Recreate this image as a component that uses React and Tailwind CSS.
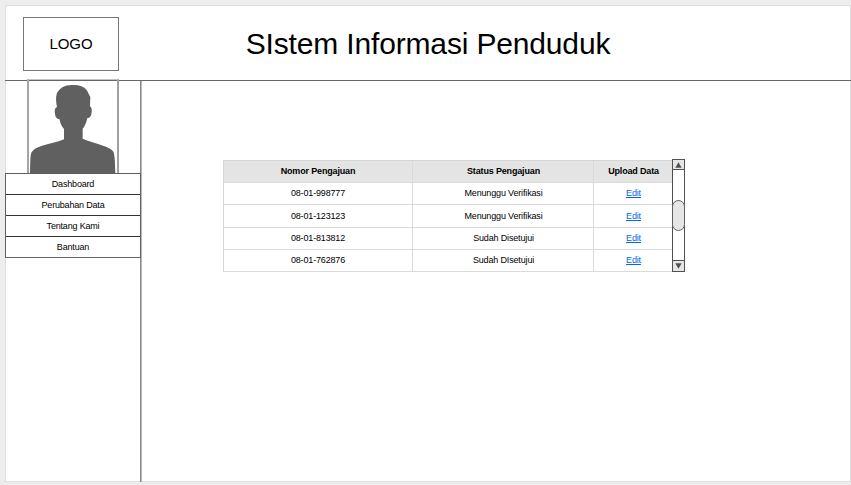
const menu = ['Dashboard', 'Perubahan Data', 'Tentang Kami', 'Bantuan'];

const rows = [
  { id: '08-01-998777', status: 'Menunggu Verifikasi', height: 'h-[22px]' },
  { id: '08-01-123123', status: 'Menunggu Verifikasi', height: 'h-[23px]' },
  { id: '08-01-813812', status: 'Sudah Disetujui', height: 'h-[22px]' },
  { id: '08-01-762876', status: 'Sudah DIsetujui', height: 'h-[22px]' },
];

function Avatar() {
  return (
    <div className="-mt-[2px] ml-[22px] h-[94px] w-[92px] border-x-2 border-t border-t-[#c4c4c4] border-l-[#a5a5a5] border-r-[#a0a0a0]">
      <svg className="mt-px block h-[92px] w-[88px]" viewBox="87 18 264 276" fill="#606060">
        <path d="M218 30C236 29 251 34 260 45C264 51 266 58 271 66L270 94C275 97 276 104 275 111C274 122 270 130 262 129C260 140 255 153 248 161V191C269 199 290 205 309 212C321 216 335 221 340 230C345 241 345 268 346 294H90C91 269 90 246 94 233C99 223 111 217 124 213C148 205 171 202 192 193V162C184 154 181 144 178 132C170 133 166 125 165 117C163 106 165 98 171 96C168 84 167 68 170 57C176 39 197 29 218 30Z" />
      </svg>
    </div>
  );
}

function Scrollbar() {
  return (
    <div className="-ml-px flex h-[113px] w-[13px] flex-col items-center justify-between border border-[#505050] bg-white">
      <div className="flex h-[10px] w-full items-center justify-center border-b border-[#505050] bg-[#e6e6e6]">
        <svg className="h-[6px] w-[7px]" viewBox="0 0 7 6" fill="#505050"><path d="M3.5 0.3L6.7 5.7H0.3Z" /></svg>
      </div>
      <div className="-mx-px mt-[1px] h-[31px] w-[13px] shrink-0 rounded-full border border-[#606060] bg-[#e6e6e6]" />
      <div className="mt-[1px] flex h-[11px] w-full items-center justify-center border-t border-[#505050] bg-[#e6e6e6]">
        <svg className="h-[6px] w-[7px]" viewBox="0 0 7 6" fill="#505050"><path d="M0.3 0.3H6.7L3.5 5.7Z" /></svg>
      </div>
    </div>
  );
}

export default function App() {
  const base = 'flex items-center justify-center border-r border-[#dadada]';
  const cell = `${base} pl-px`;
  return (
    <div className="h-[485px] w-[851px] overflow-hidden bg-[#ededed] pt-[5px] pl-[5px] font-['Liberation_Sans',Arial,sans-serif] text-black">
      <div className="flex h-[477px] w-[846px] flex-col bg-white shadow-[inset_0_0_0_1px_#dedede]">
        <header className="flex h-[76px] shrink-0 border-b border-[#666666]">
          <div className="mt-[12px] ml-[18px] flex h-[54px] w-[96px] items-center justify-center border border-[#777777] text-[15px] tracking-[-0.1px]">LOGO</div>
          <h1 className="ml-[126px] w-[366px] pt-[18px] text-center text-[30px] leading-[42px] tracking-[-0.16px] whitespace-nowrap">SIstem Informasi Penduduk</h1>
        </header>
        <div className="flex flex-1">
          <aside className="w-[137px] shrink-0 border-r border-[#b8b8b8]">
            <div className="flow-root h-full border-r border-[#888888]">
              <Avatar />
              <nav className="-mr-px border-x border-t border-[#606060]">
                {menu.map((item) => (
                  <div key={item} className="flex h-[21px] items-center justify-center border-b border-[#333333] text-[9px] leading-none tracking-[-0.18px] last:border-[#666666]">
                    {item}
                  </div>
                ))}
              </nav>
            </div>
          </aside>
          <main className="flex flex-1 items-start pt-[78px] pl-[81px]">
            <div className="mt-[1px] w-[450px] border-t border-l border-[#d6d6d6] text-[9px] leading-none tracking-[-0.16px]">
              <div className="grid h-[22px] grid-cols-[189px_181px_79px] border-b border-[#dadada] bg-[#e4e4e4] font-bold">
                <div className={base}>Nomor Pengajuan</div>
                <div className={cell}>Status Pengajuan</div>
                <div className={cell}>Upload Data</div>
              </div>
              {rows.map((row) => (
                <div key={row.id} className={`grid grid-cols-[189px_181px_79px] border-b border-[#dadada] ${row.height}`}>
                  <div className={base}>{row.id}</div>
                  <div className={cell}>{row.status}</div>
                  <div className={cell}><a href="#" className="text-[#0066ee] underline">Edit</a></div>
                </div>
              ))}
            </div>
            <Scrollbar />
          </main>
        </div>
      </div>
    </div>
  );
}
